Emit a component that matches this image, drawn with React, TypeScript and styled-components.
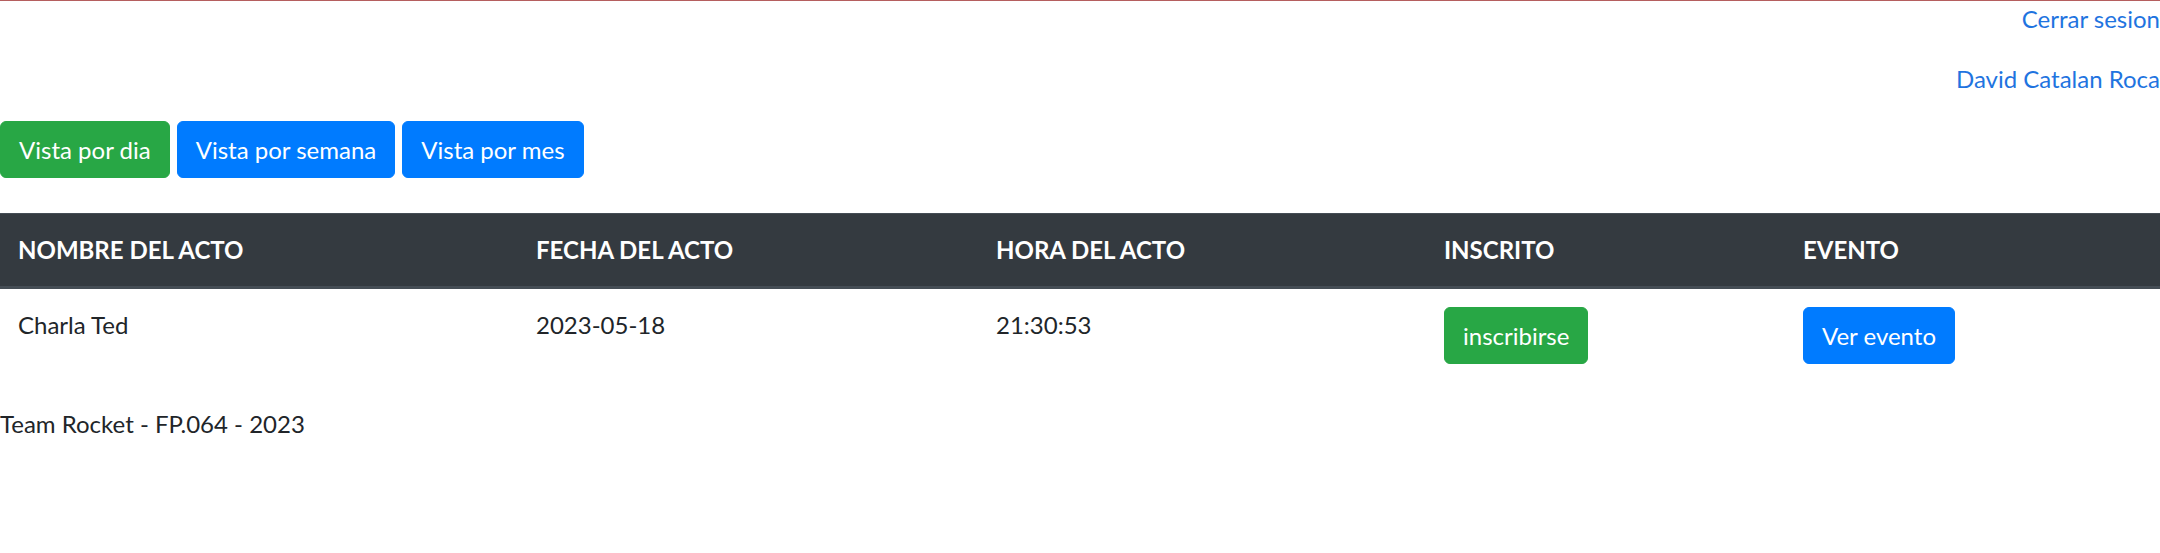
import styled, { createGlobalStyle } from "styled-components";

const GlobalStyle = createGlobalStyle`
  body {
    margin: 0;
    font-family: Lato, "Open Sans", sans-serif;
    font-size: 24px;
    line-height: 1.5;
    color: #212529;
    background: #fff;
  }
  * {
    box-sizing: border-box;
  }
`;

const Page = styled.div`
  border-top: 1px solid #b55f5f;
`;

const UserLine = styled.p`
  margin: 0 0 24px;
  text-align: right;

  a {
    color: #1f74e0;
    text-decoration: none;
  }
`;

const ViewBar = styled.div`
  display: flex;
  gap: 7px;
  margin-bottom: 35px;
`;

const Button = styled.button<{ $variant: "success" | "primary" }>`
  display: inline-block;
  height: 57px;
  padding: 9px 18px;
  border: 1.5px solid
    ${(p) => (p.$variant === "success" ? "#28a745" : "#007bff")};
  border-radius: 6px;
  background: ${(p) => (p.$variant === "success" ? "#28a745" : "#007bff")};
  color: #fff;
  font-family: inherit;
  font-size: 24px;
  line-height: 36px;
  cursor: pointer;
`;

const Table = styled.table`
  width: 100%;
  border-collapse: collapse;
  table-layout: fixed;
  margin-bottom: 24px;
`;

const HeadCell = styled.th`
  padding: 18px;
  text-align: left;
  font-weight: 700;
  color: #fff;
  background: #343a40;
  border-top: 1px solid #454d55;
  border-bottom: 3px solid #454d55;
  vertical-align: bottom;
`;

const Cell = styled.td`
  padding: 18px;
  vertical-align: top;
  border-top: 1px solid #dee2e6;
`;

const Footer = styled.footer`
  line-height: 36px;
`;

const columns = [
  { title: "NOMBRE DEL ACTO", width: 518 },
  { title: "FECHA DEL ACTO", width: 460 },
  { title: "HORA DEL ACTO", width: 448 },
  { title: "INSCRITO", width: 359 },
  { title: "EVENTO", width: 375 },
];

export default function App() {
  return (
    <Page>
      <GlobalStyle />
      <UserLine>
        <a href="#">Cerrar sesion</a>
      </UserLine>
      <UserLine>
        <a href="#">David Catalan Roca</a>
      </UserLine>

      <ViewBar>
        <Button $variant="success">Vista por dia</Button>
        <Button $variant="primary">Vista por semana</Button>
        <Button $variant="primary">Vista por mes</Button>
      </ViewBar>

      <Table>
        <colgroup>
          {columns.map((c) => (
            <col key={c.title} style={{ width: c.width }} />
          ))}
        </colgroup>
        <thead>
          <tr>
            {columns.map((c) => (
              <HeadCell key={c.title}>{c.title}</HeadCell>
            ))}
          </tr>
        </thead>
        <tbody>
          <tr>
            <Cell>Charla Ted</Cell>
            <Cell>2023-05-18</Cell>
            <Cell>21:30:53</Cell>
            <Cell>
              <Button $variant="success">inscribirse</Button>
            </Cell>
            <Cell>
              <Button $variant="primary">Ver evento</Button>
            </Cell>
          </tr>
        </tbody>
      </Table>

      <Footer>Team Rocket - FP.064 - 2023</Footer>
    </Page>
  );
}
